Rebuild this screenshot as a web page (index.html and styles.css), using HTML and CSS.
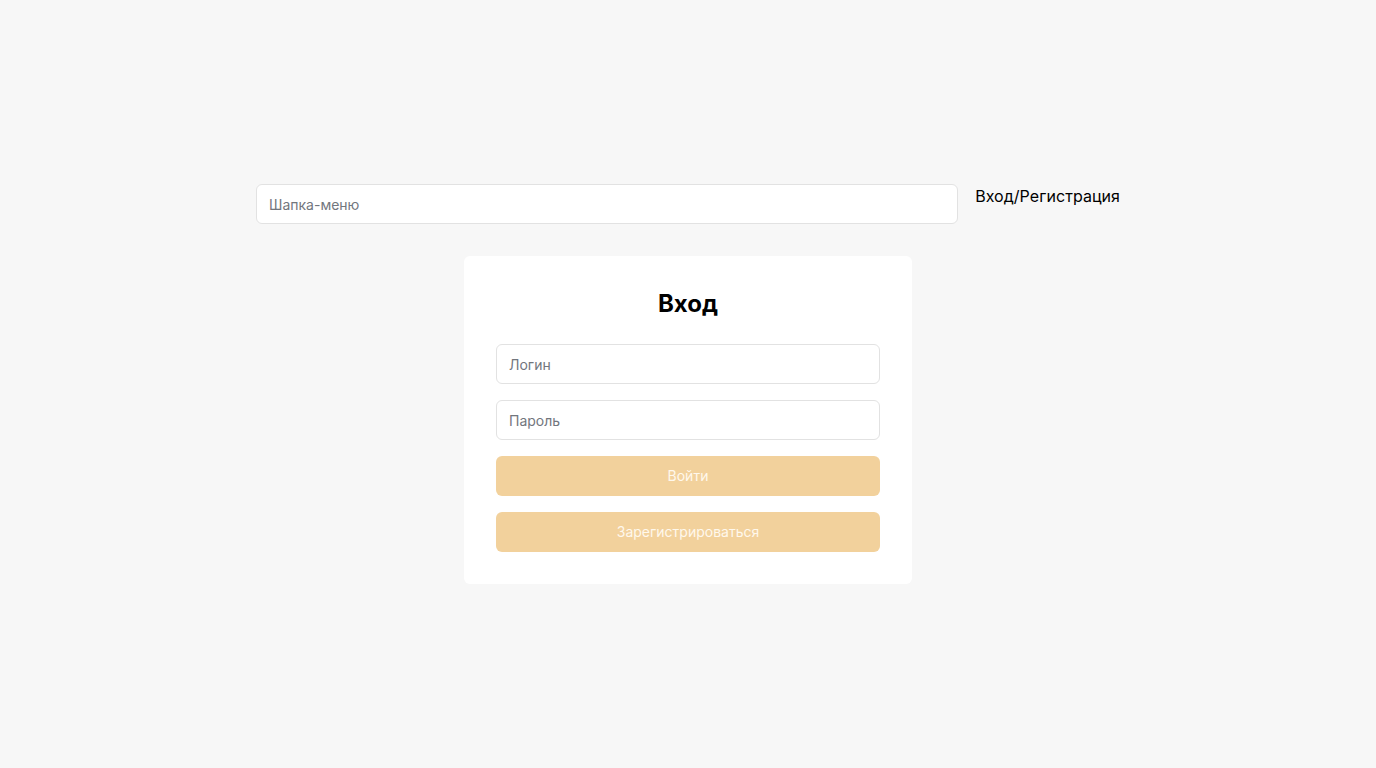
FILE: index.html
```html
<!DOCTYPE html>
<html lang="ru">
<head>
<meta charset="utf-8">
<title>Вход</title>
<link rel="stylesheet" href="styles.css">
</head>
<body>
<div class="page">
  <header class="header">
    <input class="field header-field" type="text" placeholder="Шапка-меню">
    <a class="auth-link" href="#">Вход/Регистрация</a>
  </header>
  <main class="card">
    <h2 class="card-title">Вход</h2>
    <form class="form">
      <input class="field" type="text" placeholder="Логин">
      <input class="field" type="password" placeholder="Пароль">
      <button class="btn" type="button">Войти</button>
      <button class="btn" type="button">Зарегистрироваться</button>
    </form>
  </main>
</div>
</body>
</html>
```
FILE: styles.css
```css
* { box-sizing: border-box; }
html, body { margin: 0; padding: 0; }
body {
  background: #f7f7f7;
  font-family: Inter, "Noto Sans", sans-serif;
  color: #000;
}
.page {
  min-height: 100vh;
  display: flex;
  flex-direction: column;
  align-items: center;
  justify-content: center;
  gap: 32px;
}
.header {
  width: 864px;
  display: flex;
  align-items: flex-start;
  gap: 17px;
}
.header-field { flex: 1; }
.auth-link {
  color: #000;
  text-decoration: none;
  font-size: 16px;
  line-height: 24px;
  letter-spacing: 0.05px;
  white-space: nowrap;
}
.field {
  display: block;
  width: 100%;
  height: 40px;
  padding: 0 12px;
  border: 1px solid #e2e2e2;
  border-radius: 6px;
  background: #fff;
  font-family: inherit;
  font-size: 14px;
  color: #000;
  outline: none;
}
.field::placeholder { color: #72767d; }
.card {
  width: 448px;
  background: #fff;
  border-radius: 6px;
  padding: 32px;
}
.card-title {
  margin: 0 0 24px;
  text-align: center;
  font-size: 24px;
  line-height: 32px;
  font-weight: 700;
}
.form {
  display: flex;
  flex-direction: column;
  gap: 16px;
}
.btn {
  height: 40px;
  padding: 0 0 2px;
  border: none;
  border-radius: 6px;
  background: #f2d19c;
  color: #fff8ec;
  font-family: inherit;
  font-size: 14px;
  cursor: pointer;
}
```
